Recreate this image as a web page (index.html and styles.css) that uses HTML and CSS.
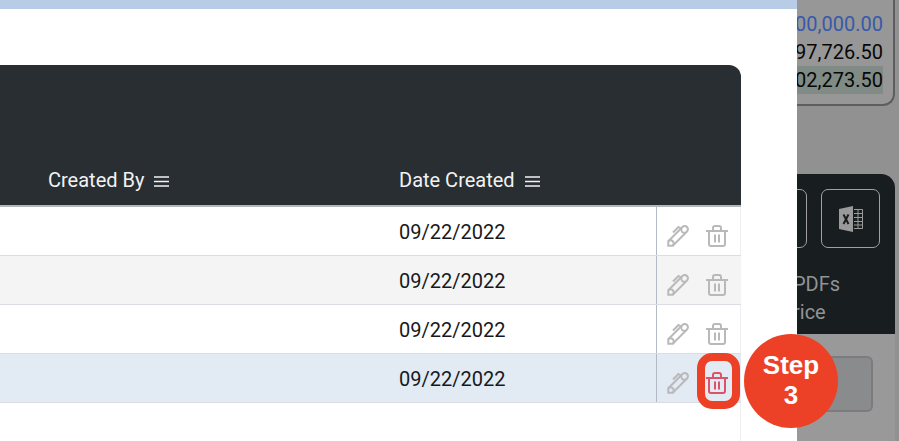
FILE: index.html
```
<!doctype html>
<html lang="en">
<head>
	<meta charset="utf-8" />
	<title>Price Records</title>

	<link rel="stylesheet" href="styles.css">
</head>

<body>
	<svg class="sprite" aria-hidden="true">
		<symbol id="pencil" viewBox="0 0 22 22">
			<path d="M1.300 20.700v-4.500L15.500 2a3 3 0 0 1 4.500 4.500L5.800 20.700z" />
			<path d="M14.500 3.500a3 3 0 0 0 4 4M1.300 16.200a3 3 0 0 1 4.500 4.500M6 7.500L11.500 2l2.500 1.500" />
		</symbol>
		<symbol id="trash" viewBox="0 0 22 22">
			<path d="M0 6h22M3 6v13q0 2 2 2h12q2 0 2-2V6M7 6V3q0-2 2-2h4q2 0 2 2v3M9 9.500v8M13 9.500v8" />
		</symbol>
		<symbol id="menu" viewBox="0 0 15 11">
			<path d="M0 1h15M0 5.500h15M0 10h15" />
		</symbol>
	</svg>

	<div class="page">
		<main class="modal">
			<div class="modal-bar"></div>
			<div class="table-wrap">
				<table>
					<thead>
						<tr>
							<th class="created-by">Created By <button class="menu" aria-label="Created By menu"><svg><use href="#menu" /></svg></button></th>
							<th class="date">Date Created <button class="menu" aria-label="Date Created menu"><svg><use href="#menu" /></svg></button></th>
							<th class="tools"></th>
						</tr>
					</thead>
					<tbody>
						<tr>
							<td></td>
							<td>09/22/2022</td>
							<td class="tools">
								<div class="actions">
									<button aria-label="Edit"><svg><use href="#pencil" /></svg></button>
									<button aria-label="Delete"><svg><use href="#trash" /></svg></button>
								</div>
							</td>
						</tr>
						<tr>
							<td></td>
							<td>09/22/2022</td>
							<td class="tools">
								<div class="actions">
									<button aria-label="Edit"><svg><use href="#pencil" /></svg></button>
									<button aria-label="Delete"><svg><use href="#trash" /></svg></button>
								</div>
							</td>
						</tr>
						<tr>
							<td></td>
							<td>09/22/2022</td>
							<td class="tools">
								<div class="actions">
									<button aria-label="Edit"><svg><use href="#pencil" /></svg></button>
									<button aria-label="Delete"><svg><use href="#trash" /></svg></button>
								</div>
							</td>
						</tr>
						<tr class="selected">
							<td></td>
							<td>09/22/2022</td>
							<td class="tools">
								<div class="actions">
									<button aria-label="Edit"><svg><use href="#pencil" /></svg></button>
									<button class="delete" aria-label="Delete"><svg><use href="#trash" /></svg></button>
									<span class="ring"></span>
									<span class="step">Step<br>3</span>
								</div>
							</td>
						</tr>
					</tbody>
				</table>
			</div>
		</main>

		<aside class="behind">
			<div class="totals">
				<div class="total blue">00,000.00</div>
				<div class="total">97,726.50</div>
				<div class="total green">02,273.50</div>
			</div>

			<div class="export">
				<div class="export-head">
					<div class="export-buttons">
						<button class="export-button" aria-label="Export"></button>
						<button class="export-button" aria-label="Export to Excel">
							<svg class="excel" viewBox="0 0 26 26">
								<path fill="#9a9a9a" d="M1 3L15 0v26L1 23z" />
								<path fill="none" stroke="#9a9a9a" stroke-width="1" d="M16 3.500h8.500v19H16M16 7.500h8M16 11.500h8M16 15.500h8M16 19h8M20 4v18" />
								<path fill="none" stroke="#181d20" stroke-width="2" d="M5.500 8.500l5 9.500M10.500 8.500L5.500 18" />
							</svg>
						</button>
					</div>
					<p>PDFs<br>rice</p>
				</div>
				<div class="export-body">
					<button class="field" aria-label="Select"></button>
				</div>
			</div>
		</aside>
	</div>
</body>
</html>
```

FILE: styles.css
```
*, *::before, *::after {
	box-sizing: border-box;
}

body {
	margin: 0;
	font: normal 20px/28px Roboto, sans-serif;
	color: #16191b;
	background: #929292;
}

button {
	padding: 0;
	border: 0;
	color: inherit;
	background: none;
}

svg {
	display: block;
	fill: none;
	stroke: currentColor;
}

.sprite {
	position: absolute;
	width: 0;
	height: 0;
}

.page {
	display: grid;
	grid-template-columns: 1fr 102px;
	min-height: 100vh;
	overflow: hidden;
}

/* modal */

.modal {
	display: flex;
	flex-direction: column;
	position: relative;
	z-index: 1;
	background: #fff;
}

.modal-bar {
	height: 9px;
	background: #b8cce8;
}

.table-wrap {
	flex: 1;
	margin: 56px 56px 0 0;
	border-right: 1px solid #eeeef0;
	border-top-right-radius: 12px;
}

table {
	width: calc(100% + 1px);
	table-layout: fixed;
	border-collapse: separate;
	border-spacing: 0;
}

th {
	height: 142px;
	padding: 0 0 11px;
	vertical-align: bottom;
	text-align: left;
	font-weight: normal;
	color: #f2f2f2;
	background: #282e32;
	background-clip: padding-box;
	border-bottom: 2px solid #b4b7ba;
}

th:last-child {
	border-top-right-radius: 12px;
}

.created-by {
	padding-left: 48px;
}

.date {
	width: 257px;
}

.tools {
	width: 85px;
}

.menu {
	margin-left: 5px;
}

.menu svg {
	width: 15px;
	height: 11px;
	stroke-width: 1.500;
}

td {
	height: 49px;
	padding: 2px 0 0;
	border-bottom: 1px solid #dcdce6;
}

td.tools {
	padding: 0;
}

tr:nth-child(even) td {
	background: #f4f4f4;
}

tr.selected td {
	background: #e2eaf4;
}

.actions {
	display: flex;
	gap: 17px;
	position: relative;
	height: 48px;
	padding: 10px 0 0 10px;
	align-items: center;
	border-left: 1px solid #b4b9c6;
	color: #b9b9b9;
}

.actions svg {
	width: 22px;
	height: 22px;
	stroke-width: 2;
}

.actions .delete {
	color: #dc5268;
}

.ring {
	position: absolute;
	top: -1px;
	left: 40px;
	width: 43px;
	height: 56px;
	border: 8px solid #ec4126;
	border-radius: 15px;
}

.step {
	position: absolute;
	top: -20px;
	left: 87px;
	width: 94px;
	height: 94px;
	padding-top: 16px;
	border-radius: 50%;
	text-align: center;
	font: bold 26px/30px "Liberation Sans", sans-serif;
	color: #fff;
	background: #ec4126;
}

/* dimmed page under the modal */

.behind {
	padding-right: 4px;
	background: #919191;
}

.totals {
	height: 106px;
	padding: 10px 10px 0 0;
	border: 2px solid #5e5e60;
	border-width: 0 2px 2px 0;
	border-radius: 0 0 12px 0;
	text-align: right;
	color: #070707;
	background: #979797;
}

.total {
	display: flex;
	justify-content: flex-end;
}

.blue {
	color: #3759ab;
}

.green {
	background: #7f8b84;
}

.export {
	margin-top: 68px;
}

.export-head {
	height: 160px;
	padding-top: 15px;
	border-top-right-radius: 14px;
	color: #929394;
	background: #181d20;
}

.export-buttons {
	display: flex;
	justify-content: flex-end;
	gap: 14px;
	padding-right: 15px;
}

.export-button {
	display: flex;
	flex: none;
	align-items: center;
	justify-content: center;
	width: 59px;
	height: 59px;
	border: 1px solid #a0a0a0;
	border-radius: 7px;
}

.excel {
	width: 26px;
	height: 26px;
	stroke: none;
}

.export-head p {
	margin: 22px 0 0 -4px;
}

.export-body {
	height: 107px;
	padding: 22px 22px 0 0;
	background: #999;
}

.field {
	width: 100%;
	height: 56px;
	border: 2px solid #7c7c80;
	border-left: 0;
	border-radius: 0 6px 6px 0;
	background: #8a8b8c;
}
```
